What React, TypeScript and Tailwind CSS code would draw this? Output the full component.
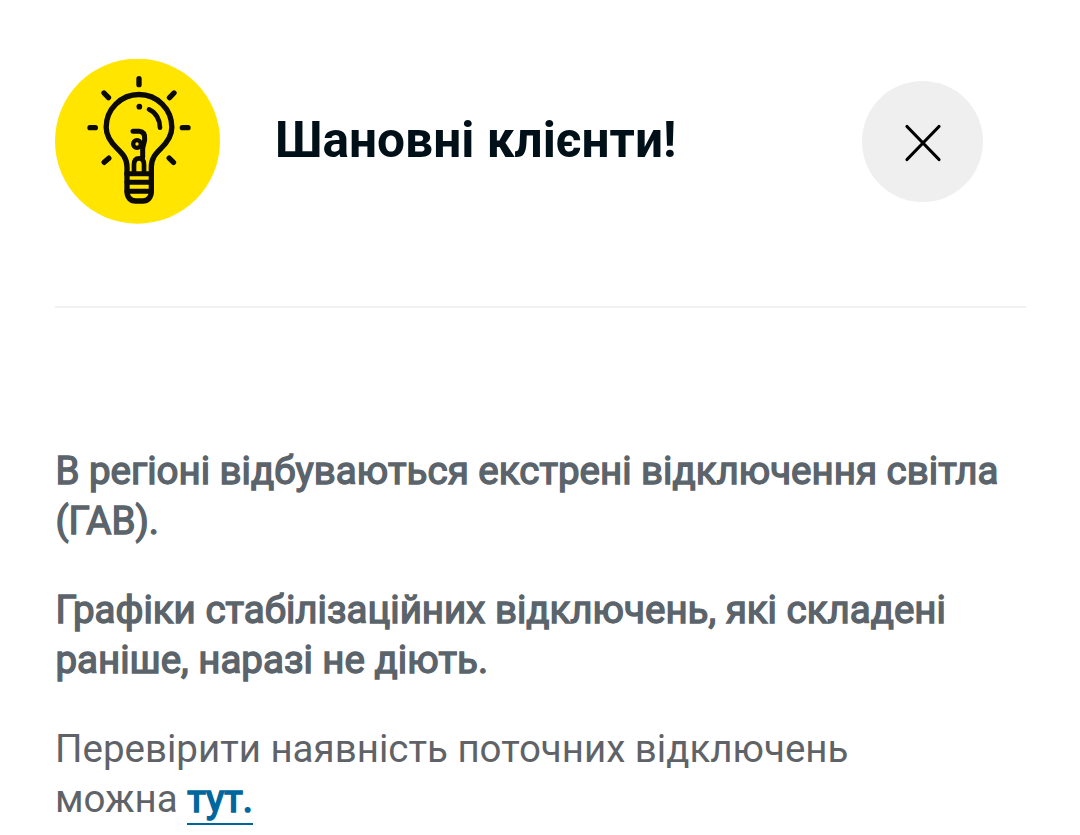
import React from 'react';

interface NoticeParagraph {
  text: string;
}

const BulbIcon = () => (
  <svg viewBox="30 27 495 495" className="w-[165px] h-[165px] shrink-0" fill="none" stroke="#0b0a05" strokeLinecap="round" strokeLinejoin="round">
    <circle cx="277.5" cy="273.5" r="247.5" fill="#ffe500" stroke="none" />
    {/* rays */}
    <path
      strokeWidth="16"
      d="M282 86V104M177 129L190.500 143M387 129L373.500 143M135 233H151M412 233H429M177.500 337L191.500 324.500M385.500 337L372.500 324.500"
    />
    {/* glass */}
    <path
      strokeWidth="16"
      d="M246 371V351C246 324 232 311 216 295C196 276 183.500 257 183.500 232A98.500 98.500 0 0 1 380.500 232C380.500 257 368 276 348 295C332 311 319 324 319 351V371"
    />
    <path strokeWidth="14" d="M312 178C333 187 345 210 345 233" />
    <circle cx="283" cy="170" r="8.500" fill="#0b0a05" stroke="none" />
    {/* filament */}
    <path strokeWidth="15" d="M264 244H283C295 245 300 254 299 268C298 280 293 286 293 299V321" />
    <circle cx="276" cy="282" r="11.500" strokeWidth="13" />
    <path strokeWidth="14" d="M267 371V344C267 332 272 325 282 325C292 325 297 332 297 344V371" />
    {/* socket */}
    <path strokeWidth="16" d="M246 370V423C246 442 256 453 272 453H293C309 453 319 442 319 423V370" />
    <path strokeWidth="15" d="M246 371H319M246 397H319M246 423.500H319" />
  </svg>
);

const CloseButton = () => (
  <button type="button" aria-label="Закрити" className="flex items-center justify-center w-[121px] h-[121px] rounded-full bg-[#efefef] shrink-0">
    <svg viewBox="0 0 40 40" className="w-10 h-10 mt-[3px]" fill="none" stroke="#000" strokeWidth="3.200" strokeLinecap="round">
      <path d="M4 3.500L36 36.500M36 3.500L4 36.500" />
    </svg>
  </button>
);

const App = () => {
  const paragraphs: NoticeParagraph[] = [
    { text: 'В регіоні відбуваються екстрені відключення світла (ГАВ).' },
    { text: 'Графіки стабілізаційних відключень, які складені раніше, наразі не діють.' },
  ];

  return (
    <div className="w-[1080px] h-[835px] overflow-hidden bg-white pl-[55px] pr-[54px] pt-[59px] font-['Roboto',sans-serif]">
      <header className="flex items-center h-[249px] pb-[82px] pr-[43px] border-b-2 border-[#f1f1f1]">
        <BulbIcon />
        <h1 className="flex-1 ml-[55px] -mt-1 text-[49.6px] leading-[60px] font-bold text-[#001018]">
          Шановні клієнти!
        </h1>
        <CloseButton />
      </header>

      <div className="mt-[138px] space-y-[39px] text-[38.5px] leading-[50px] text-[#5b636b]">
        {paragraphs.map((paragraph, index) => (
          <p key={index} className="pl-[0.4px] [-webkit-text-stroke:1.4px_#5b636b]">
            {paragraph.text}
          </p>
        ))}
        <p className="text-[#5f6368]">
          Перевірити наявність поточних відключень
          <br />
          можна{' '}
          <a href="#" className="pb-0.5 text-[#00669e] border-b-2 border-[#00669e] [-webkit-text-stroke:1.6px_#00669e]">
            тут.
          </a>
        </p>
      </div>
    </div>
  );
};

export default App;
